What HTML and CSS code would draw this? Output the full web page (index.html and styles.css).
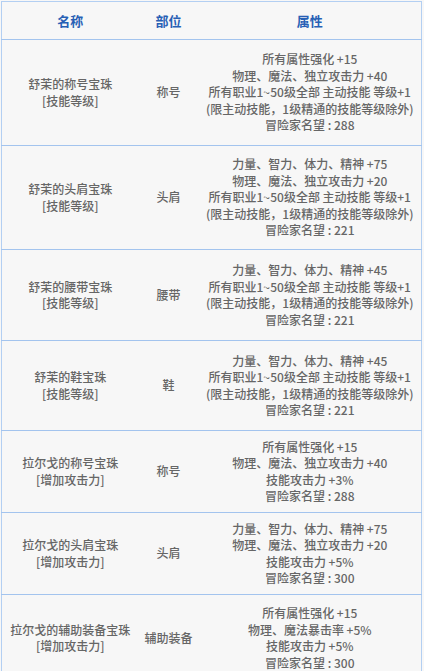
FILE: index.html
```html
<!DOCTYPE html>
<html lang="zh">
<head>
<meta charset="utf-8">
<link rel="stylesheet" href="styles.css">
</head>
<body>
<table class="gems">
  <colgroup>
    <col class="c-name">
    <col class="c-slot">
    <col class="c-attr">
  </colgroup>
  <thead>
    <tr class="head"><th>名称</th><th>部位</th><th>属性</th></tr>
  </thead>
  <tbody>
    <tr class="r1">
      <td>舒茉的称号宝珠<br>[技能等级]</td>
      <td>称号</td>
      <td>所有属性强化 +15<br>物理、魔法、独立攻击力 +40<br>所有职业1~50级全部 主动技能 等级+1<br>(限主动技能，1级精通的技能等级除外)<br>冒险家名望 : 288</td>
    </tr>
    <tr class="r2">
      <td>舒茉的头肩宝珠<br>[技能等级]</td>
      <td>头肩</td>
      <td>力量、智力、体力、精神 +75<br>物理、魔法、独立攻击力 +20<br>所有职业1~50级全部 主动技能 等级+1<br>(限主动技能，1级精通的技能等级除外)<br>冒险家名望 : 221</td>
    </tr>
    <tr class="r3">
      <td>舒茉的腰带宝珠<br>[技能等级]</td>
      <td>腰带</td>
      <td>力量、智力、体力、精神 +45<br>所有职业1~50级全部 主动技能 等级+1<br>(限主动技能，1级精通的技能等级除外)<br>冒险家名望 : 221</td>
    </tr>
    <tr class="r4">
      <td>舒茉的鞋宝珠<br>[技能等级]</td>
      <td>鞋</td>
      <td>力量、智力、体力、精神 +45<br>所有职业1~50级全部 主动技能 等级+1<br>(限主动技能，1级精通的技能等级除外)<br>冒险家名望 : 221</td>
    </tr>
    <tr class="r5">
      <td>拉尔戈的称号宝珠<br>[增加攻击力]</td>
      <td>称号</td>
      <td>所有属性强化 +15<br>物理、魔法、独立攻击力 +40<br>技能攻击力 +3%<br>冒险家名望 : 288</td>
    </tr>
    <tr class="r6">
      <td>拉尔戈的头肩宝珠<br>[增加攻击力]</td>
      <td>头肩</td>
      <td>力量、智力、体力、精神 +75<br>物理、魔法、独立攻击力 +20<br>技能攻击力 +5%<br>冒险家名望 : 300</td>
    </tr>
    <tr class="r7">
      <td>拉尔戈的辅助装备宝珠<br>[增加攻击力]</td>
      <td>辅助装备</td>
      <td>所有属性强化 +15<br>物理、魔法暴击率 +5%<br>技能攻击力 +5%<br>冒险家名望 : 300</td>
    </tr>
  </tbody>
</table>
</body>
</html>
```

FILE: styles.css
```css
html, body {
  margin: 0;
  padding: 0;
  background: #f7f7f7;
}

body {
  font-family: "Noto Sans CJK SC", "Noto Sans", sans-serif;
  padding: 1px 0 0 1px;
}

.gems {
  border-collapse: collapse;
  width: 421px;
  table-layout: fixed;
  background: #f7f7f7;
  border: 1px solid #b3cff2;
}

.c-name { width: 137px; }
.c-slot { width: 60px; }
.c-attr { width: auto; }

.gems th,
.gems td {
  padding: 0;
  text-align: center;
  vertical-align: middle;
  border-bottom: 1px solid #a3c4ee;
}

.gems th {
  height: 37px;
  font-size: 13px;
  font-weight: 700;
  color: #2760b5;
}

.gems td {
  font-size: 12px;
  line-height: 16.5px;
  font-weight: 500;
  color: #666666;
}

.r1 td { height: 105px; }
.r2 td { height: 103px; }
.r3 td { height: 90px; }
.r4 td { height: 89px; }
.r5 td { height: 81px; }
.r6 td { height: 81px; }
.r7 td { height: 86px; }
```
